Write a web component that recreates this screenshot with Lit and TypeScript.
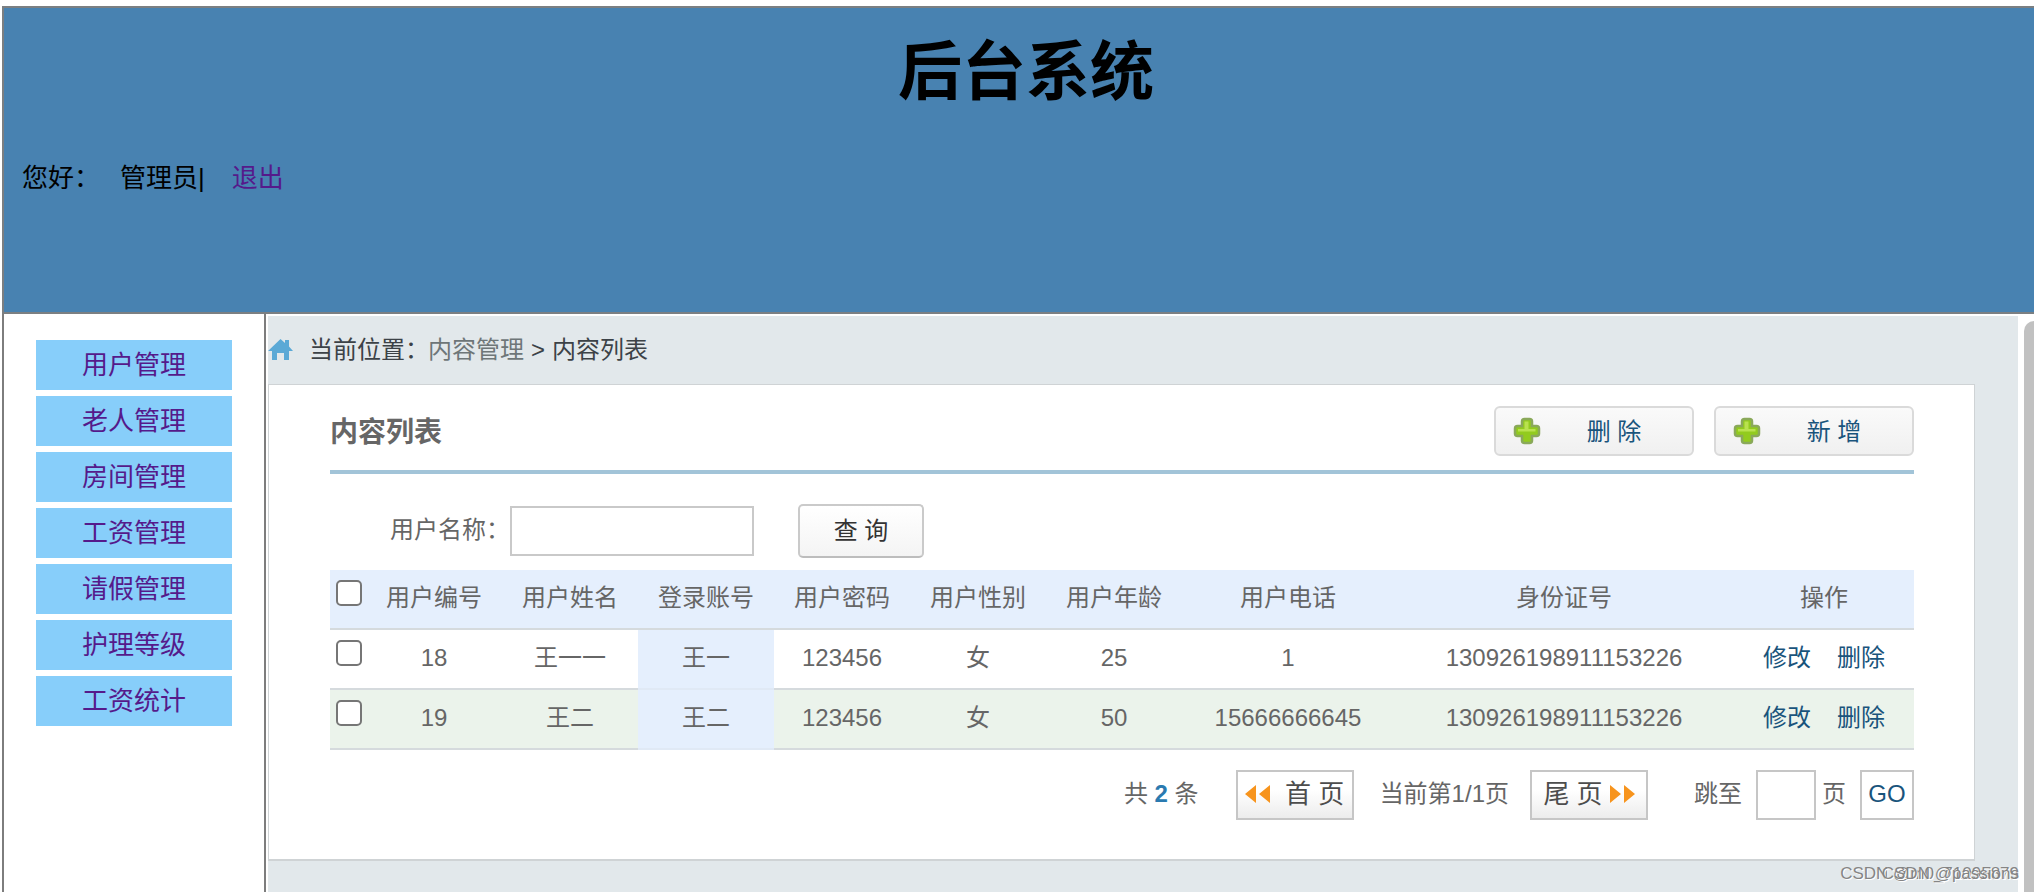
import { LitElement, html, css, svg } from "lit";
import { customElement, property, state } from "lit/decorators.js";

interface User {
  id: number;
  name: string;
  account: string;
  password: string;
  gender: string;
  age: number;
  phone: string;
  idCard: string;
}

const USERS: User[] = [
  { id: 18, name: "王一一", account: "王一", password: "123456", gender: "女", age: 25, phone: "1", idCard: "130926198911153226" },
  { id: 19, name: "王二", account: "王二", password: "123456", gender: "女", age: 50, phone: "15666666645", idCard: "130926198911153226" },
];

const MENU = ["用户管理", "老人管理", "房间管理", "工资管理", "请假管理", "护理等级", "工资统计"];

const COLUMNS = ["用户编号", "用户姓名", "登录账号", "用户密码", "用户性别", "用户年龄", "用户电话", "身份证号", "操作"];

const shared = css`
  *,
  *::before,
  *::after {
    box-sizing: border-box;
  }
  a {
    text-decoration: none;
  }
`;

@customElement("page-header")
export class PageHeader extends LitElement {
  static styles = [
    shared,
    css`
      :host {
        display: block;
        background: #4882b1;
        border: 2px solid #7b7f82;
        border-right: 0;
        height: 308px;
        padding: 18px 0 0 14px;
        color: #000;
      }
      .title {
        margin: 0;
        font-size: 64px;
        line-height: 92px;
        font-weight: 700;
        text-align: center;
      }
      .greeting {
        display: flex;
        align-items: center;
        margin: 42px 0 0 4px;
        font-size: 26px;
        line-height: 36px;
      }
      .who {
        margin-left: 20px;
      }
      .logout {
        margin-left: 27px;
        color: #551a8b;
      }
    `,
  ];

  render() {
    return html`
      <h1 class="title">后台系统</h1>
      <div class="greeting">
        <span>您好：</span><span class="who">管理员|</span><a class="logout" href="#">退出</a>
      </div>
    `;
  }
}

@customElement("side-menu")
export class SideMenu extends LitElement {
  static styles = [
    shared,
    css`
      :host {
        display: block;
        padding: 26px 32px 0;
        border: 2px solid #7d7d7d;
        border-width: 0 2px;
      }
      .menu {
        display: grid;
        gap: 6px;
        margin: 0;
        padding: 0;
        list-style: none;
      }
      .item {
        display: flex;
        align-items: center;
        justify-content: center;
        height: 50px;
        background: #87cefa;
        color: #551a8b;
        font-size: 26px;
        line-height: 36px;
      }
    `,
  ];

  render() {
    return html`
      <nav>
        <ul class="menu">
          ${MENU.map((m) => html`<li><a class="item" href="#">${m}</a></li>`)}
        </ul>
      </nav>
    `;
  }
}

@customElement("tool-button")
export class ToolButton extends LitElement {
  @property() label = "";

  static styles = [
    shared,
    css`
      :host {
        display: block;
      }
      .button {
        display: grid;
        grid-template-columns: 28px 1fr;
        align-items: center;
        width: 200px;
        height: 50px;
        padding: 0 26px 4px 17px;
        border: 2px solid #dadada;
        border-radius: 6px;
        background: linear-gradient(#fafafa, #f0f0f0);
        color: #19547c;
        font: inherit;
      }
      .icon {
        display: block;
        margin-top: 4px;
      }
      .label {
        padding-left: 21px;
      }
    `,
  ];

  render() {
    return html`
      <button class="button" type="button">
        <svg class="icon" width="28" height="28" viewBox="0 0 28 28" aria-hidden="true">
          <path
            d="M11.500 2h5q2.500 0 2.500 2.500V9h4.500q2.500 0 2.500 2.500v5q0 2.500-2.500 2.500H19v4.500q0 2.500-2.500 2.500h-5Q9 26 9 23.500V19H4.500Q2 19 2 16.500v-5Q2 9 4.500 9H9V4.500Q9 2 11.500 2z"
            fill="#92cb1e" stroke="#8aa95a" stroke-width="2.500" />
          <path d="M11.500 4.500h4v7.500h7v2.500H5V12h6.500z" fill="#b9e24e" />
        </svg>
        <span class="label">${this.label}</span>
      </button>
    `;
  }
}

@customElement("user-table")
export class UserTable extends LitElement {
  @state() private selected = new Set<number>();

  static styles = [
    shared,
    css`
      :host {
        display: block;
      }
      .table {
        width: 100%;
        table-layout: fixed;
        border-collapse: separate;
        border-spacing: 0;
        text-align: center;
      }
      .c-check {
        width: 36px;
      }
      .c-basic {
        width: 136px;
      }
      .c-phone {
        width: 212px;
      }
      .c-ops {
        width: 180px;
      }
      th,
      td {
        height: 60px;
        padding: 0 0 2px;
        border-bottom: 2px solid #d5dadd;
        font-weight: 400;
        line-height: 36px;
      }
      th {
        background: #e5effd;
      }
      .even td {
        background: #ebf3eb;
      }
      .odd td.account,
      .even td.account {
        background: #e5effd;
        border-bottom-color: #e0e9f5;
      }
      .pick {
        text-align: left;
        padding-left: 6px;
      }
      .box {
        display: block;
        appearance: none;
        width: 26px;
        height: 26px;
        margin: 0 0 10px;
        border: 2px solid #767676;
        border-radius: 5px;
        background: #fff;
      }
      .box:checked {
        background: #2a7ab0;
      }
      .ops {
        display: flex;
        justify-content: center;
        gap: 26px;
      }
      .ops a {
        color: #19547c;
      }
    `,
  ];

  private toggle(id: number) {
    const next = new Set(this.selected);
    next.has(id) ? next.delete(id) : next.add(id);
    this.selected = next;
  }

  private toggleAll() {
    this.selected = this.selected.size === USERS.length ? new Set() : new Set(USERS.map((u) => u.id));
  }

  render() {
    return html`
      <table class="table">
        <colgroup>
          <col class="c-check" />
          ${[1, 2, 3, 4, 5, 6].map(() => html`<col class="c-basic" />`)}
          <col class="c-phone" />
          <col />
          <col class="c-ops" />
        </colgroup>
        <thead>
          <tr>
            <th class="pick">
              <input class="box" type="checkbox" aria-label="全选" .checked=${this.selected.size === USERS.length} @change=${this.toggleAll} />
            </th>
            ${COLUMNS.map((c) => html`<th scope="col">${c}</th>`)}
          </tr>
        </thead>
        <tbody>
          ${USERS.map(
            (u, i) => html`
              <tr class=${i % 2 ? "even" : "odd"}>
                <td class="pick">
                  <input class="box" type="checkbox" aria-label=${u.name} .checked=${this.selected.has(u.id)} @change=${() => this.toggle(u.id)} />
                </td>
                <td>${u.id}</td>
                <td>${u.name}</td>
                <td class="account">${u.account}</td>
                <td>${u.password}</td>
                <td>${u.gender}</td>
                <td>${u.age}</td>
                <td>${u.phone}</td>
                <td>${u.idCard}</td>
                <td><div class="ops"><a href="#">修改</a><a href="#">删除</a></div></td>
              </tr>
            `
          )}
        </tbody>
      </table>
    `;
  }
}

@customElement("page-bar")
export class PageBar extends LitElement {
  static styles = [
    shared,
    css`
      :host {
        display: flex;
        align-items: center;
        justify-content: flex-end;
        margin-top: 20px;
        line-height: 36px;
      }
      .text {
        padding-bottom: 2px;
      }
      .count {
        color: #2a7ab0;
      }
      .edge {
        display: flex;
        align-items: center;
        justify-content: center;
        gap: 6px;
        width: 118px;
        height: 50px;
        padding: 0 0 2px;
        border: 2px solid #c6c6c6;
        background: linear-gradient(#fff 40%, #ececec);
        color: #4d4d4d;
        font: inherit;
        font-size: 26px;
      }
      .first {
        gap: 14px;
        margin: 0 26px 0 37px;
      }
      .last {
        margin: 0 46px 0 21px;
      }
      .number {
        width: 60px;
        height: 50px;
        margin: 0 6px 0 14px;
        border: 2px solid #c6c6c6;
        border-radius: 0;
        background: #fff;
        font: inherit;
        text-align: center;
      }
      .go {
        width: 54px;
        height: 50px;
        margin-left: 14px;
        padding: 0 0 2px;
        border: 2px solid #c6c6c6;
        background: #fff;
        color: #19547c;
        font: inherit;
      }
    `,
  ];

  private arrows(d: string) {
    return html`<svg width="26" height="20" viewBox="0 0 26 20" aria-hidden="true">${svg`<path d=${d} fill="#f7941d" />`}</svg>`;
  }

  render() {
    return html`
      <span class="text">共 <b class="count">2</b> 条</span>
      <button class="edge first" type="button">${this.arrows("M11 1v18L0 10zM25 1v18L14 10z")}<span>首 页</span></button>
      <span class="text">当前第1/1页</span>
      <button class="edge last" type="button"><span>尾 页</span>${this.arrows("M1 1v18l11-9zM15 1v18l11-9z")}</button>
      <label class="text" for="page">跳至</label>
      <input class="number" id="page" type="text" />
      <span class="text">页</span>
      <button class="go" type="button">GO</button>
    `;
  }
}

@customElement("app-root")
export class AppRoot extends LitElement {
  static styles = [
    shared,
    css`
      :host {
        box-sizing: border-box;
        display: flex;
        flex-direction: column;
        min-height: 100vh;
        padding: 6px 0 0 2px;
        background: #fff;
        color: #666;
        font: 24px "Liberation Sans", "Noto Sans CJK SC", sans-serif;
      }
      .body {
        flex: 1;
        display: grid;
        grid-template-columns: 264px 1fr;
      }
      .frame {
        position: relative;
        display: grid;
        grid-template-columns: 1fr 10px;
        gap: 6px;
        padding: 2px 0 0 2px;
      }
      .content {
        padding-right: 43px;
        background: #e2e8eb;
      }
      .crumbs {
        display: flex;
        align-items: center;
        height: 68px;
        gap: 7px;
        color: #3c4247;
        line-height: 36px;
      }
      .crumbs .home {
        margin-right: 9px;
      }
      .place {
        margin-right: -8px;
      }
      .crumbs a {
        color: #6e7678;
      }
      .card {
        padding: 21px 60px 39px 61px;
        border: 1px solid #cfd3d5;
        border-bottom-width: 2px;
        background: #fff;
      }
      .bar {
        display: flex;
        align-items: flex-start;
        gap: 20px;
        height: 68px;
        border-bottom: 4px solid #a2c4d8;
      }
      .heading {
        flex: 1;
        margin: 0;
        font-size: 28px;
        line-height: 54px;
      }
      .search {
        display: flex;
        align-items: center;
        height: 96px;
        padding: 18px 0 0 60px;
        line-height: 36px;
      }
      .field {
        width: 244px;
        height: 50px;
        margin-right: 44px;
        border: 2px solid #c9c9c9;
        background: #fff;
        font: inherit;
      }
      .query {
        width: 126px;
        height: 54px;
        padding: 0;
        border: 2px solid #cacaca;
        border-bottom-color: #bdbdbd;
        border-radius: 5px;
        background: linear-gradient(#fff, #f4f4f4);
        color: #333;
        font: inherit;
      }
      .search label {
        padding-bottom: 2px;
      }
      .scroll {
        margin-top: 5px;
        border-radius: 10px 0 0 0;
        background: #c1c1c1;
      }
      .mark {
        position: absolute;
        right: 15px;
        bottom: 6px;
        color: #858585;
        font-size: 17px;
        line-height: 24px;
        text-shadow: 1px 1px 0 #fff;
      }
    `,
  ];

  render() {
    return html`
      <page-header></page-header>
      <div class="body">
        <side-menu></side-menu>
        <div class="frame">
          <main class="content">
            <div class="crumbs">
              <svg class="home" width="25" height="22" viewBox="0 0 25 22" aria-hidden="true">
                <path d="M12.500 0L17 4V1h4v6.500l4 4.500h-4v9h-5v-7H9v7H4v-9H0z" fill="#5ba9d6" />
              </svg>
              <span class="place">当前位置：</span><a href="#">内容管理</a><span>&gt;</span><span>内容列表</span>
            </div>
            <section class="card">
              <div class="bar">
                <h2 class="heading">内容列表</h2>
                <tool-button label="删 除"></tool-button>
                <tool-button label="新 增"></tool-button>
              </div>
              <form class="search" @submit=${(e: Event) => e.preventDefault()}>
                <label for="name">用户名称：</label>
                <input class="field" id="name" type="text" />
                <button class="query" type="submit">查 询</button>
              </form>
              <user-table></user-table>
              <page-bar></page-bar>
            </section>
          </main>
          <div class="scroll"></div>
          <span class="mark">CSDN @m0_71095879</span>
          <span class="mark">CSDN @passions</span>
        </div>
      </div>
    `;
  }
}
